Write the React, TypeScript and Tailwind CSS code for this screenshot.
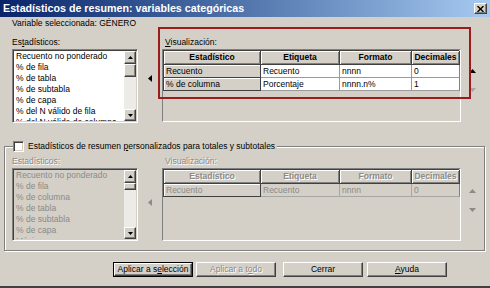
import React from "react";

const raised =
  "border border-t-white border-l-white border-r-[#404040] border-b-[#404040] shadow-[inset_-1px_-1px_0_#808080]";
const sunken =
  "border border-t-[#808080] border-l-[#808080] border-r-white border-b-white shadow-[inset_1px_1px_0_#404040,inset_-1px_-1px_0_#d4d0c8]";

function Tri({ dir, color, w, h }: { dir: "up" | "down" | "left"; color: string; w: number; h: number }) {
  const pts =
    dir === "up" ? `0,${h} ${w},${h} ${w / 2},0` : dir === "down" ? `0,0 ${w},0 ${w / 2},${h}` : `${w},0 ${w},${h} 0,${h / 2}`;
  return (
    <svg width={w} height={h} viewBox={`0 0 ${w} ${h}`} className="block">
      <polygon points={pts} fill={color} />
    </svg>
  );
}

function ScrollBar({ thumb }: { thumb: number }) {
  return (
    <div className="w-[12px] h-full flex flex-col">
      <div className={`h-[13px] bg-[#d4d0c8] flex items-center justify-center ${raised}`}>
        <Tri dir="up" color="#000" w={5} h={3} />
      </div>
      <div className="flex-1 bg-[#ecebe8] flex flex-col">
        <div className={`bg-[#d4d0c8] ${raised}`} style={{ height: thumb }} />
      </div>
      <div className={`h-[12px] bg-[#d4d0c8] flex items-center justify-center ${raised}`}>
        <Tri dir="down" color="#000" w={5} h={3} />
      </div>
    </div>
  );
}

function ListBox({ items, disabled, h, thumb }: { items: string[]; disabled?: boolean; h: number; thumb: number }) {
  return (
    <div className={`w-[126px] flex ${sunken} p-[1px] ${disabled ? "bg-[#d4d0c8]" : "bg-white"}`} style={{ height: h }}>
      <div className={`flex-1 overflow-hidden pl-[2px] ${disabled ? "text-[#8c8a86]" : "text-black"}`}>
        {items.map((it) => (
          <div key={it} className="h-[11px] leading-[11px] whitespace-nowrap">
            {it}
          </div>
        ))}
      </div>
      <ScrollBar thumb={thumb} />
    </div>
  );
}

function Grid({ rows, disabled }: { rows: string[][]; disabled?: boolean }) {
  const heads = ["Estadístico", "Etiqueta", "Formato", "Decimales"];
  const hdText = disabled ? "text-[#8c8a86] [text-shadow:1px_1px_0_#fff]" : "text-black";
  return (
    <div className="w-[299px] h-[73px] border border-t-[#808080] border-l-[#808080] border-r-white border-b-white pt-[0px]">
      <div className="grid grid-cols-[97px_79px_72px_48px] border-t border-l border-[#404040] w-[296px]">
        {heads.map((h) => (
          <div
            key={h}
            className={`h-[14px] flex items-center justify-center font-bold bg-[#d4d0c8] border-r border-b border-[#404040] shadow-[inset_1px_1px_0_#fff,inset_-1px_-1px_0_#808080] ${hdText}`}
          >
            {h}
          </div>
        ))}
        {rows.map((r, ri) =>
          r.map((c, ci) =>
            ci === 0 ? (
              <div
                key={`${ri}-${ci}`}
                className={`h-[13px] flex items-center pl-[2px] bg-[#d4d0c8] border-r border-b border-[#404040] shadow-[inset_1px_1px_0_#fff] ${
                  disabled ? "text-[#8c8a86]" : "text-black"
                }`}
              >
                {c}
              </div>
            ) : (
              <div
                key={`${ri}-${ci}`}
                className={`h-[13px] flex items-center pl-[2px] border-r border-b ${
                  disabled ? "bg-[#d4d0c8] text-[#8c8a86] border-[#a8a6a2]" : "bg-white text-black border-[#9a9a9a]"
                } ${ci === 3 ? "border-r-[#808080]" : ""}`}
              >
                {c}
              </div>
            )
          )
        )}
      </div>
    </div>
  );
}

function Button({ children, def, disabled }: { children: React.ReactNode; def?: boolean; disabled?: boolean }) {
  return (
    <div className={`w-[80px] h-[15px] ${def ? "border border-black" : ""}`}>
      <div
        className={`w-full h-full flex items-center justify-center bg-[#d4d0c8] ${raised} ${
          disabled ? "text-[#8c8a86] [text-shadow:1px_1px_0_#fff]" : "text-black"
        }`}
      >
        {children}
      </div>
    </div>
  );
}

export default function App() {
  const top = [
    "Recuento no ponderado",
    "% de fila",
    "% de tabla",
    "% de subtabla",
    "% de capa",
    "% del N válido de fila",
    "% del N válido de columna",
  ];
  const bottom = ["Recuento no ponderado", "% de fila", "% de columna", "% de tabla", "% de subtabla", "% de capa", "Máxima"];
  const dis = "text-[#8c8a86] [text-shadow:1px_1px_0_#fff]";
  return (
    <div className="w-[490px] h-[288px] bg-[#d4d0c8] relative overflow-hidden font-['Liberation_Sans',Arial,sans-serif] text-[8.5px] leading-none text-black flex flex-col border-b-2 border-[#404040]">
      {/* Title bar */}
      <div className="h-[17px] shrink-0 flex items-center justify-between pl-[3px] pr-[3px] bg-linear-to-r from-[#0a246a] to-[#a6caf0]">
        <span className="text-white font-bold text-[10.7px] whitespace-nowrap">Estadísticos de resumen: variables categóricas</span>
        <div className={`w-[13px] h-[11px] bg-[#d4d0c8] flex items-center justify-center ${raised}`}>
          <svg width="7" height="6" viewBox="0 0 7 6">
            <path d="M0.5 0 L6.5 6 M6.5 0 L0.5 6" stroke="#000" strokeWidth="1.4" />
          </svg>
        </div>
      </div>

      {/* Variable row */}
      <div className="h-[13px] shrink-0 leading-[13px] pl-[12px]">Variable seleccionada: GÉNERO</div>

      {/* Top section */}
      <div className="h-[93px] shrink-0 flex">
        <div className="ml-[12px] w-[126px] flex flex-col pt-[7px]">
          <div className="h-[11px] leading-[11px] mb-[1px]">
            Es<span className="underline">t</span>adísticos:
          </div>
          <ListBox items={top} h={74} thumb={13} />
        </div>
        <div className="w-[24px] flex justify-center pt-[45px]">
          <Tri dir="left" color="#000" w={4} h={7} />
        </div>
        <div className="w-[299px] flex flex-col pt-[7px]">
          <div className="h-[12px] leading-[11px] pl-[3px]">
            <span className="underline">V</span>isualización:
          </div>
          <Grid
            rows={[
              ["Recuento", "Recuento", "nnnn", "0"],
              ["% de columna", "Porcentaje", "nnnn.n%", "1"],
            ]}
          />
        </div>
        <div className="pl-[8px] flex flex-col pt-[39px]">
          <Tri dir="up" color="#000" w={7} h={4} />
          <div className="h-[15px]" />
          <Tri dir="down" color="#a8a6a2" w={7} h={4} />
        </div>
      </div>

      {/* Group box */}
      <div className="mt-[23px] ml-[4px] w-[481px] h-[105px] shrink-0 relative border border-[#808080] shadow-[inset_1px_1px_0_#fff,1px_1px_0_#fff]">
        <div className="absolute left-[8px] top-[-6px] flex items-center bg-[#d4d0c8] pr-[2px]">
          <div className={`w-[11px] h-[11px] bg-white ${sunken}`} />
          <span className="ml-[4px] whitespace-nowrap">
            Estadísticos de resumen <span className="underline">p</span>ersonalizados para totales y subtotales
          </span>
        </div>
        <div className="flex pt-[9px]">
          <div className="ml-[7px] w-[126px] flex flex-col">
            <div className={`h-[11px] leading-[11px] mb-[1px] ${dis}`}>Estadísticos:</div>
            <ListBox items={bottom} h={73} thumb={7} disabled />
          </div>
          <div className="w-[24px] flex justify-center pt-[43px]">
            <Tri dir="left" color="#8c8a86" w={4} h={7} />
          </div>
          <div className="w-[299px] flex flex-col">
            <div className={`h-[12px] leading-[11px] pl-[3px] ${dis}`}>Visualización:</div>
            <Grid rows={[["Recuento", "Recuento", "nnnn", "0"]]} disabled />
          </div>
          <div className="pl-[8px] flex flex-col pt-[33px]">
            <Tri dir="up" color="#8c8a86" w={7} h={4} />
            <div className="h-[15px]" />
            <Tri dir="down" color="#8c8a86" w={7} h={4} />
          </div>
        </div>
      </div>

      {/* Buttons */}
      <div className="mt-[11px] flex pl-[113px]">
        <Button def>
          Aplicar a s<span className="underline">e</span>lección
        </Button>
        <div className="ml-[3px]">
          <Button disabled>
            Aplicar a t<span className="underline">o</span>do
          </Button>
        </div>
        <div className="ml-[7px]">
          <Button>Cerrar</Button>
        </div>
        <div className="ml-[4px]">
          <Button>
            <span className="underline">A</span>yuda
          </Button>
        </div>
      </div>

      {/* Annotation frame */}
      <div className="absolute left-[158px] top-[27px] w-[313px] h-[72px] border-2 border-[#9c1c1c]" />
    </div>
  );
}
